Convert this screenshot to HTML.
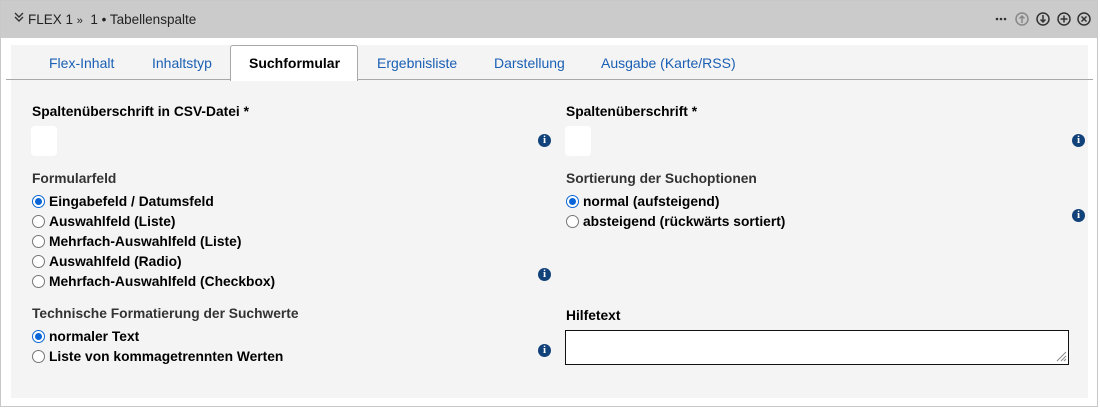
<!DOCTYPE html>
<html><head><meta charset="utf-8"><style>
*{margin:0;padding:0;box-sizing:border-box}
body{width:1100px;height:408px;background:#fff;font-family:"Liberation Sans",Arial,sans-serif;position:relative;overflow:hidden}
.a{position:absolute;white-space:nowrap}
.outer{position:absolute;left:0;top:0;width:1098px;height:407px;border:1px solid #c8c8c8;background:#fff}
.head{position:absolute;left:1px;top:1px;width:1096px;height:37px;background:#cbcbcb}
.box{position:absolute;left:11px;top:45px;width:1077px;height:353px;background:#f4f4f4}
.tabline{position:absolute;left:6px;top:79px;width:1087px;height:1px;background:#a8a8a8}
.tab{position:absolute;top:63px;font-size:14px;color:#1a5fb4;transform:translateY(-50%)}
.act{position:absolute;left:230px;top:45px;width:128px;height:36px;background:#fff;border:1px solid #a8a8a8;border-bottom:none;border-radius:3px 3px 0 0}
.lbl{font-size:13.8px;font-weight:bold;color:#000}
.lbl2{font-size:13.8px;font-weight:bold;color:#333}
.opt{font-size:13.8px;font-weight:bold;color:#000;padding-left:17px}
.r{position:absolute;left:0;top:1px;width:13px;height:13px;border-radius:50%;border:1px solid #767676;background:#fff}
.r.on{border:1px solid #0a66d8}
.r.on::after{content:"";position:absolute;left:2px;top:2px;width:7px;height:7px;border-radius:50%;background:#0a66d8}
.inf{position:absolute;width:13px;height:13px;border-radius:50%;background:#12427a;color:#fff;font-size:11px;font-weight:bold;text-align:center;line-height:13px;font-family:"Liberation Serif",serif}
.inp{position:absolute;width:26px;height:30px;background:#fff;border-radius:4px}
</style></head><body>
<div class="outer"></div>
<div class="head"></div>
<svg class="a" style="left:13px;top:11px" width="12" height="12"><path d="M2 2L6 6L10 2M2 6L6 10L10 6" fill="none" stroke="#333" stroke-width="1.4"/></svg>
<div class="a" style="left:28px;top:12px;font-size:13.5px;color:#222">FLEX 1 <span style="font-size:11px">»</span>&nbsp; 1 • Tabellenspalte</div>
<svg class="a" style="left:990px;top:10px" width="105" height="18">
<g fill="#333"><circle cx="7" cy="9" r="1.3"/><circle cx="11" cy="9" r="1.3"/><circle cx="15" cy="9" r="1.3"/></g>
<g fill="none" stroke-width="1.5">
<circle cx="32" cy="9" r="6" stroke="#888"/><path d="M32 13V6M29.5 8.5L32 6L34.5 8.5" stroke="#888"/>
<circle cx="53" cy="9" r="6" stroke="#333"/><path d="M53 5V12M50.5 9.5L53 12L55.5 9.5" stroke="#333"/>
<circle cx="74" cy="9" r="6" stroke="#333"/><path d="M74 5.5V12.5M70.5 9H77.5" stroke="#333"/>
<circle cx="94" cy="9" r="6" stroke="#333"/><path d="M91.5 6.5L96.5 11.5M96.5 6.5L91.5 11.5" stroke="#333"/>
</g></svg>
<div class="box"></div>
<div class="tabline"></div>
<div class="act"></div>
<div class="tab" style="left:49px">Flex-Inhalt</div>
<div class="tab" style="left:152px">Inhaltstyp</div>
<div class="tab" style="left:249px;color:#000;font-weight:bold">Suchformular</div>
<div class="tab" style="left:377px">Ergebnisliste</div>
<div class="tab" style="left:494px">Darstellung</div>
<div class="tab" style="left:601px">Ausgabe (Karte/RSS)</div>

<div class="a lbl" style="left:32px;top:104px">Spaltenüberschrift in CSV-Datei *</div>
<div class="inp" style="left:31px;top:126px"></div>
<div class="inf" style="left:538px;top:134px">i</div>
<div class="a lbl2" style="left:32px;top:171px">Formularfeld</div>
<div class="a opt" style="left:32px;top:194px"><span class="r on"></span>Eingabefeld / Datumsfeld</div>
<div class="a opt" style="left:32px;top:214px"><span class="r"></span>Auswahlfeld (Liste)</div>
<div class="a opt" style="left:32px;top:234px"><span class="r"></span>Mehrfach-Auswahlfeld (Liste)</div>
<div class="a opt" style="left:32px;top:254px"><span class="r"></span>Auswahlfeld (Radio)</div>
<div class="a opt" style="left:32px;top:274px"><span class="r"></span>Mehrfach-Auswahlfeld (Checkbox)</div>
<div class="inf" style="left:538px;top:268px">i</div>
<div class="a lbl2" style="left:32px;top:306px">Technische Formatierung der Suchwerte</div>
<div class="a opt" style="left:32px;top:329px"><span class="r on"></span>normaler Text</div>
<div class="a opt" style="left:32px;top:349px"><span class="r"></span>Liste von kommagetrennten Werten</div>
<div class="inf" style="left:538px;top:344px">i</div>

<div class="a lbl" style="left:566px;top:104px">Spaltenüberschrift *</div>
<div class="inp" style="left:565px;top:126px"></div>
<div class="inf" style="left:1072px;top:134px">i</div>
<div class="a lbl2" style="left:566px;top:171px">Sortierung der Suchoptionen</div>
<div class="a opt" style="left:566px;top:194px"><span class="r on"></span>normal (aufsteigend)</div>
<div class="a opt" style="left:566px;top:214px"><span class="r"></span>absteigend (rückwärts sortiert)</div>
<div class="inf" style="left:1072px;top:209px">i</div>
<div class="a lbl" style="left:566px;top:308px">Hilfetext</div>
<div class="a" style="left:565px;top:330px;width:504px;height:35px;background:#fff;border:1.5px solid #111"></div>
<svg class="a" style="left:1055px;top:350px" width="12" height="12"><path d="M11 2L2 11M11 6L6 11M11 9L9 11" stroke="#888" stroke-width="1"/></svg>
</body></html>
